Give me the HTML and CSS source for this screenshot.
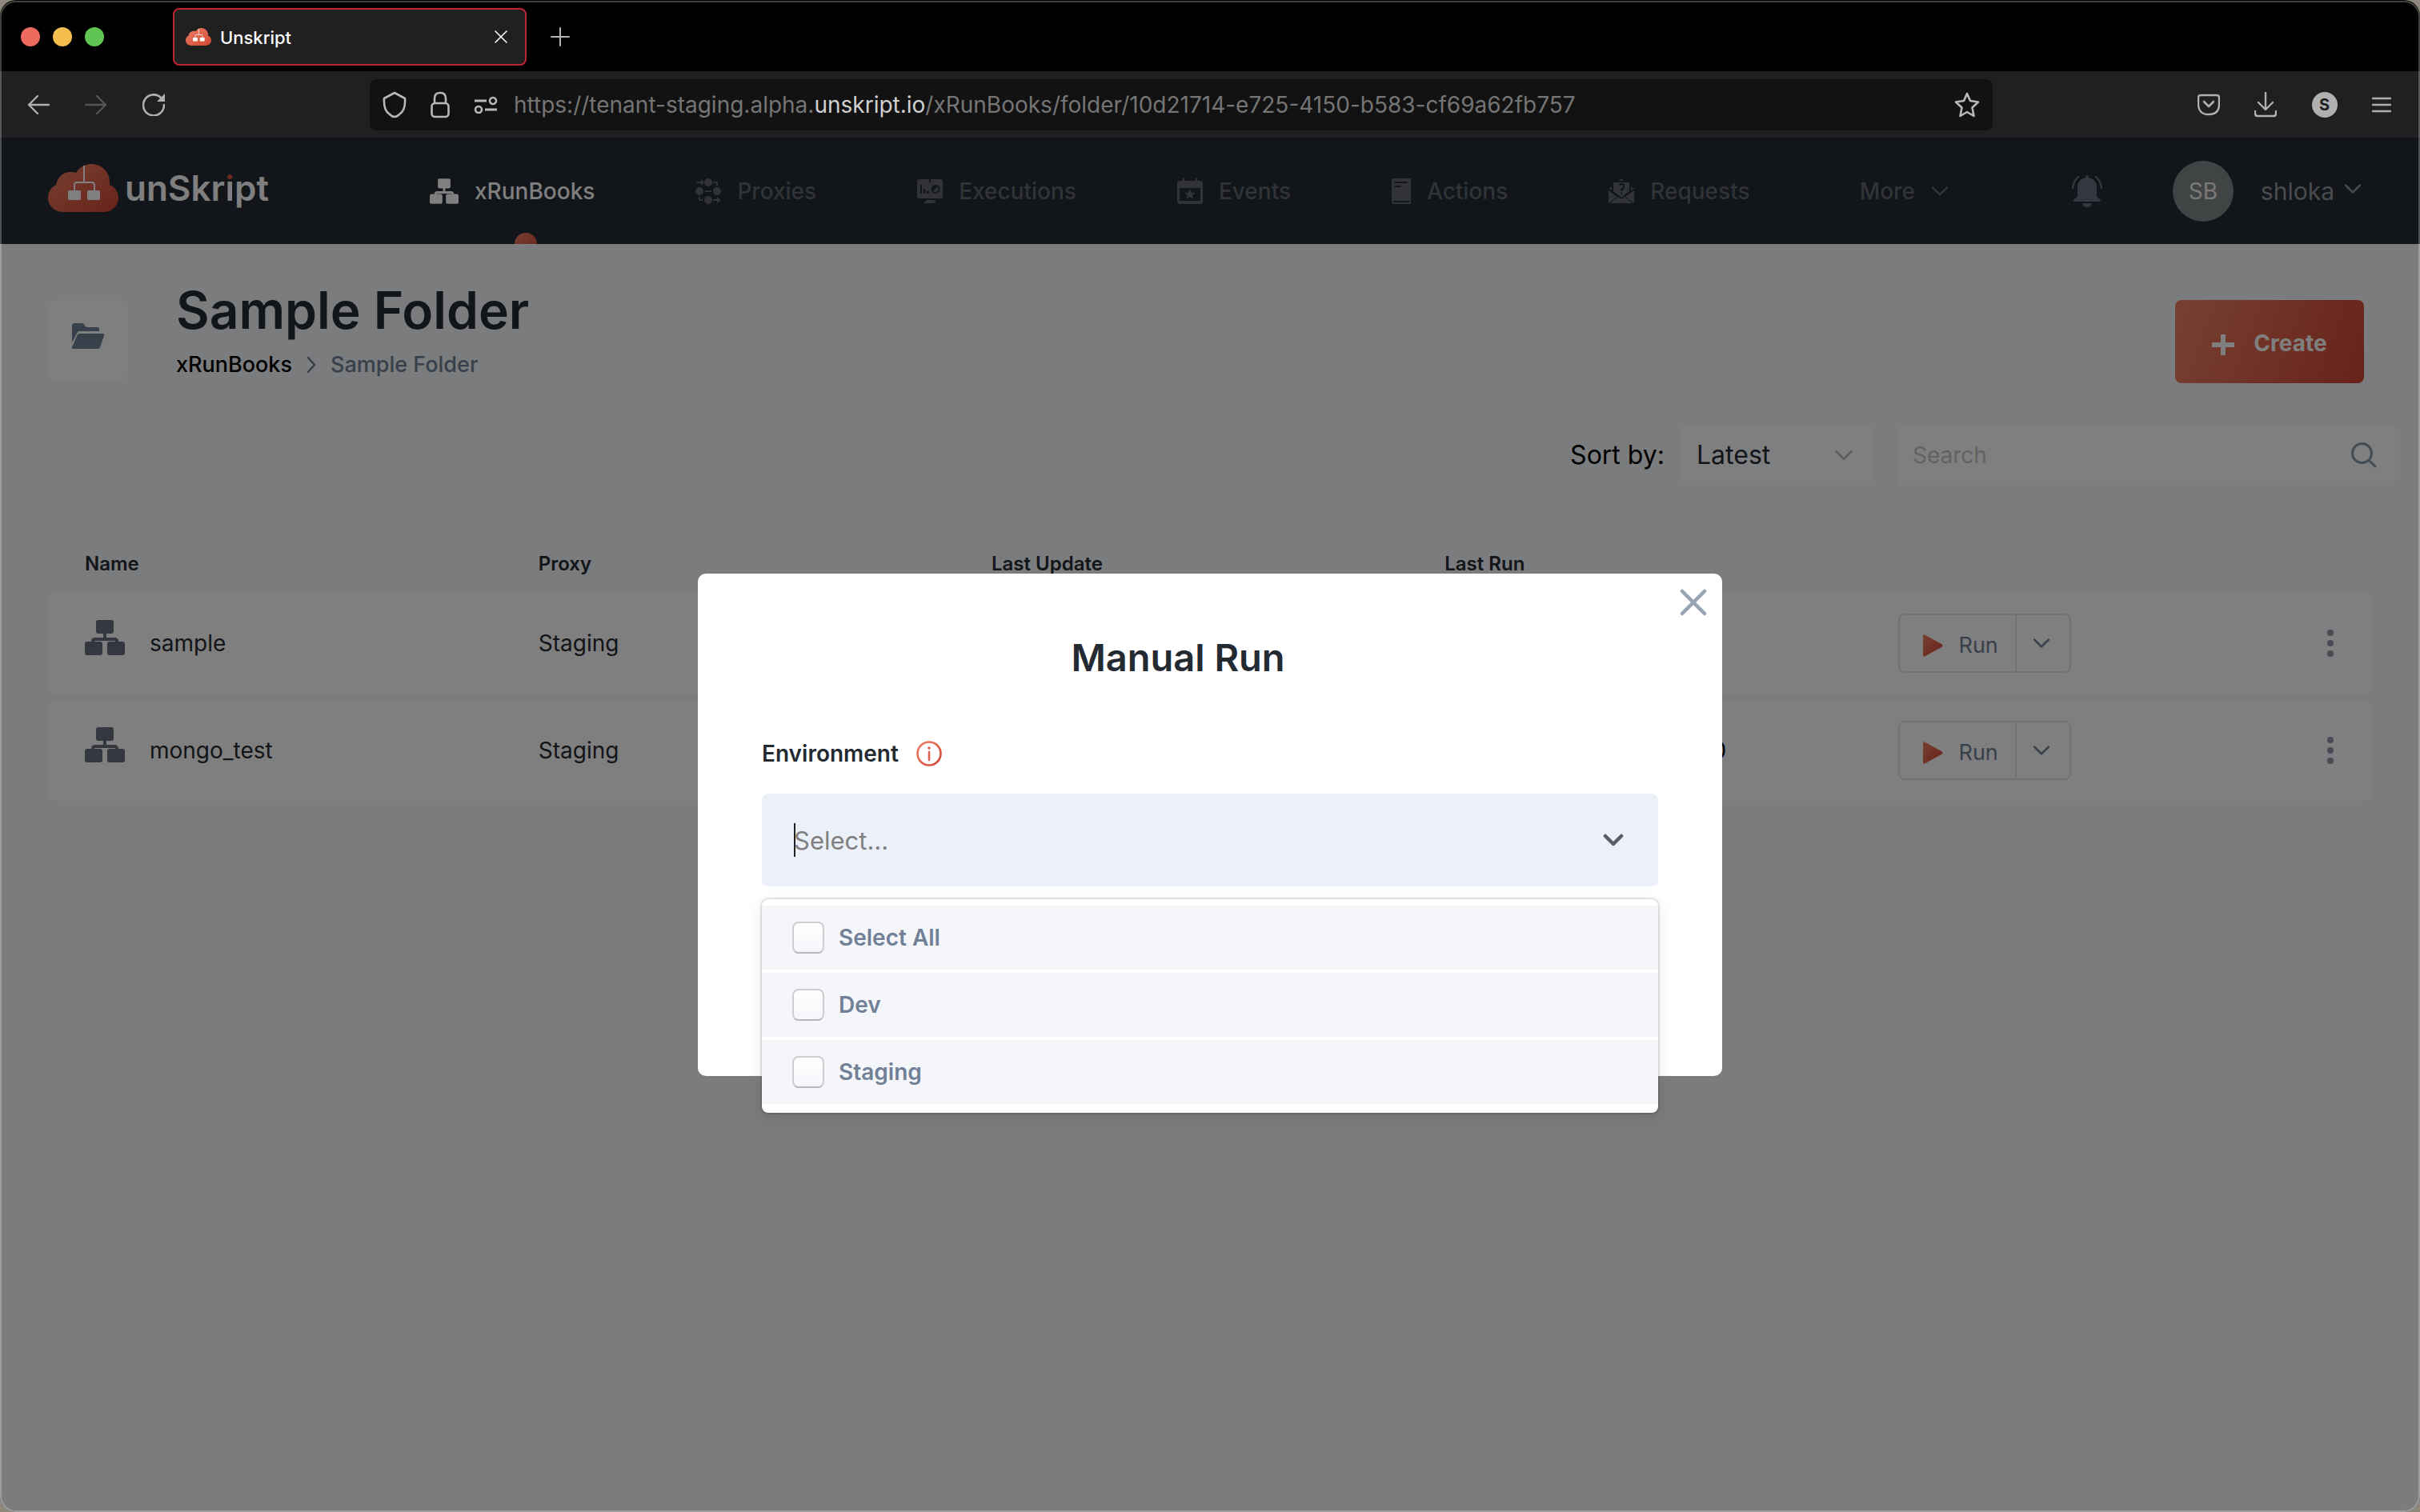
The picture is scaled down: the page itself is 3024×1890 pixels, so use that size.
FILE: index.html
```html
<!DOCTYPE html>
<html lang="en">
<head>
<meta charset="utf-8">
<title>Unskript</title>
<link rel="stylesheet" href="styles.css">
</head>
<body>
<svg class="defs" aria-hidden="true">
  <defs>
    <linearGradient id="coral" x1="0" y1="0" x2="1" y2="1"><stop offset="0" stop-color="#ee8066"/><stop offset="1" stop-color="#d04632"/></linearGradient>
    <symbol id="chevron" viewBox="0 0 20 12"><path d="M2 2l8 8 8-8" fill="none" stroke="currentColor" stroke-width="2.4" stroke-linecap="round" stroke-linejoin="round"/></symbol>
    <symbol id="tree" viewBox="0 0 50 44"><rect x="14" y="0" width="22" height="17" rx="3"/><rect x="0" y="27" width="22" height="17" rx="3"/><rect x="28" y="27" width="22" height="17" rx="3"/><path d="M25 16v8M10 28v-1q0-3 3-3h24q3 0 3 3v1" fill="none" stroke="currentColor" stroke-width="4"/></symbol>
    <symbol id="cloud" viewBox="0 0 88 60"><path d="M19 60C8 60 0 52 0 42c0-7 4-13 10-16C12 16 19 10 28 10c3 0 5 0 7 1C39 4 46 0 54 0c13 0 23 10 23 22v4c7 3 11 9 11 16 0 10-8 18-18 18z" fill="url(#coral)"/><path d="M45 2v21M33 34v-8q0-3 3-3h19q3 0 3 3v8" fill="none" stroke="#fff" stroke-width="2"/><rect x="25" y="33" width="16" height="12" rx="1" fill="#fff"/><rect x="49" y="33" width="16" height="12" rx="1" fill="#fff"/></symbol>
    <symbol id="play" viewBox="0 0 26 28"><path d="M1 2Q1-1 4 1l20 11q3 2 0 4L4 27q-3 2-3-1z" fill="url(#coral)"/></symbol>
    <symbol id="dots" viewBox="0 0 8 34"><circle cx="4" cy="4" r="4"/><circle cx="4" cy="17" r="4"/><circle cx="4" cy="30" r="4"/></symbol>
  </defs>
</svg>

<div class="window">
  <div class="tabstrip">
    <div class="lights"><span class="light red"></span><span class="light amber"></span><span class="light green"></span></div>
    <div class="tab">
      <svg class="favicon"><use href="#cloud"/></svg>
      <span class="tab-title">Unskript</span>
      <button class="plain" aria-label="Close tab"><svg width="16" height="16" viewBox="0 0 16 16"><path d="M1 1l14 14M15 1L1 15" stroke="#fbfbfe" stroke-width="1.600" stroke-linecap="round"/></svg></button>
    </div>
    <button class="plain" aria-label="New tab"><svg width="24" height="24" viewBox="0 0 24 24"><path d="M12 1v22M1 12h22" stroke="#b5b5b5" stroke-width="2" stroke-linecap="round"/></svg></button>
  </div>

  <div class="toolbar">
    <div class="history">
      <button class="plain" aria-label="Back"><svg width="28" height="28" viewBox="0 0 28 28"><path d="M27 14H2M13 3L2 14l11 11" fill="none" stroke="#b0b0b0" stroke-width="2.4" stroke-linecap="round" stroke-linejoin="round"/></svg></button>
      <button class="plain" aria-label="Forward"><svg width="28" height="28" viewBox="0 0 28 28"><path d="M1 14h25M15 3l11 11-11 11" fill="none" stroke="#545454" stroke-width="2.4" stroke-linecap="round" stroke-linejoin="round"/></svg></button>
      <button class="plain" aria-label="Reload"><svg width="28" height="28" viewBox="0 0 28 28"><path d="M27 14A13 13 0 1 1 23 5" fill="none" stroke="#b0b0b0" stroke-width="2.6" stroke-linecap="round"/><path d="M28 0v10H18z" fill="#b0b0b0"/></svg></button>
    </div>
    <div class="address">
      <svg width="30" height="34" viewBox="0 0 30 34"><path d="M15 2L28 9q1 15-7 20-3 3-6 3t-6-3Q1 24 2 9z" fill="none" stroke="#b8b8b8" stroke-width="2.6" stroke-linejoin="round"/></svg>
      <svg width="24" height="34" viewBox="0 0 24 34"><rect x="1.500" y="15" width="21" height="17" rx="4" fill="none" stroke="#b8b8b8" stroke-width="2.6"/><path d="M5 15V9q0-7 7-7t7 7v6" fill="none" stroke="#b8b8b8" stroke-width="2.6"/></svg>
      <svg width="30" height="22" viewBox="0 0 30 22"><path d="M1 6h15M14 17h15" stroke="#b8b8b8" stroke-width="3"/><circle cx="24" cy="6" r="4" fill="none" stroke="#b8b8b8" stroke-width="2.6"/><circle cx="6" cy="17" r="4" fill="none" stroke="#b8b8b8" stroke-width="2.6"/></svg>
      <span class="url">https://tenant-staging.alpha.<b>unskript.io</b>/xRunBooks/folder/10d21714-e725-4150-b583-cf69a62fb757</span>
      <button class="plain" aria-label="Bookmark"><svg width="32" height="32" viewBox="0 0 32 32"><path d="M16 2l4 9 10 1.500-7.500 7 2 10.500L16 25l-8.500 5 2-10.500L2 12.500 12 11z" fill="none" stroke="#b8b8b8" stroke-width="2.6" stroke-linejoin="round"/></svg></button>
    </div>
    <div class="tools">
      <button class="plain" aria-label="Pocket"><svg width="28" height="28" viewBox="0 0 28 28"><path d="M4 2h20q3 0 3 3v8q0 13-13 13T1 13V5q0-3 3-3z" fill="none" stroke="#b0b0b0" stroke-width="2.4"/><path d="M8 10l6 6 6-6" fill="none" stroke="#b0b0b0" stroke-width="2.600" stroke-linecap="round" stroke-linejoin="round"/></svg></button>
      <button class="plain" aria-label="Downloads"><svg width="28" height="32" viewBox="0 0 28 32"><path d="M14 1v20M5 13l9 9 9-9M1 24v3q0 3 3 3h20q3 0 3-3v-3" fill="none" stroke="#b0b0b0" stroke-width="2.4" stroke-linecap="round" stroke-linejoin="round"/></svg></button>
      <button class="plain account">S</button>
      <button class="plain" aria-label="Menu"><svg width="24" height="20" viewBox="0 0 24 20"><path d="M1 2h22M1 10h22M1 18h22" stroke="#b0b0b0" stroke-width="2.400" stroke-linecap="round"/></svg></button>
    </div>
  </div>

  <div class="app">
    <header class="header">
      <a class="brand" href="#"><svg class="logo"><use href="#cloud"/></svg><span>unSkr<span class="dot-i">i</span>pt</span></a>
      <nav class="nav">
        <a class="nav-item active" href="#"><svg width="36" height="32"><use href="#tree"/></svg>xRunBooks</a>
        <a class="nav-item" href="#"><svg width="32" height="32" viewBox="0 0 32 32"><circle cx="16" cy="5" r="5"/><circle cx="5" cy="16" r="5"/><circle cx="27" cy="16" r="5"/><circle cx="16" cy="27" r="5"/><path d="M2 4h5V1l4 4-4 4V6H2zM22 4h6v5h-2V6h-4zM4 23h2v3h3v2H4zM22 26h5v-3l5 4-5 4v-3h-5zM12 15h8v2h-8z"/></svg>Proxies</a>
        <a class="nav-item" href="#"><svg width="32" height="32" viewBox="0 0 32 32"><path fill-rule="evenodd" d="M3 1h12v4h2V1h12q3 0 3 3v19q0 2-3 2H3q-3 0-3-2V4q0-3 3-3zM4 8v11h2V8zM8 13v6h2v-6zM12 16v3h3v-3zM23 8a5.500 5.500 0 1 0 .1 0z"/><path d="M12 27h8l3 2v2H9v-2zM23 13l3-3 1 5-4 3-3-2z"/></svg>Executions</a>
        <a class="nav-item" href="#"><svg width="32" height="32" viewBox="0 0 32 32"><path fill-rule="evenodd" d="M7 0h2v3h14V0h2v3h4q3 0 3 3v23q0 3-3 3H3q-3 0-3-3V6q0-3 3-3h4zM3 12v16h26V12z"/><path d="M16 13l2 4.500 5 .5-4 3 1.500 5-4.500-3-4.500 3L13 21l-4-3 5-.5z"/></svg>Events</a>
        <a class="nav-item" href="#"><svg width="24" height="32" viewBox="0 0 24 32"><path fill-rule="evenodd" d="M2 0h20q2 0 2 2v28q0 2-2 2H2q-2 0-2-2V2q0-2 2-2zM4 4v2h16V4zM4 9v2h8V9zM2 28v2h20v-2z"/></svg>Actions</a>
        <a class="nav-item" href="#"><svg width="32" height="32" viewBox="0 0 32 32"><path fill-rule="evenodd" d="M16 0l3 3h-6zM6 5h20v11L16 24 6 16zM13 9h2q0-1 1.500-1t1.500 2q0 1-1.500 2T15 15v1h2q0-1 1.500-2T20 10q0-4-3.500-4T13 9zM15 17.500h2v2h-2z"/><path d="M4 10v5L0 13zM28 10v5l4-2zM0 15l11 8-11 8zM32 15l-11 8 11 8zM2 31l10-8 4 3 4-3 10 8z"/></svg>Requests</a>
        <a class="nav-item more" href="#">More<svg width="22" height="14"><use href="#chevron"/></svg></a>
      </nav>
      <button class="plain bell" aria-label="Notifications"><svg width="38" height="40" viewBox="0 0 38 40"><path d="M17 3q0-3 2-3t2 3q10 2 10 12v10q0 3 4 5 3 3-1 3H4q-4 0-1-3 4-2 4-5V15Q7 5 17 3zM13 35h12q-1 5-6 5t-6-5z"/><path d="M8 2Q2 8 1 16M30 2q6 6 7 14" fill="none" stroke="currentColor" stroke-width="2.400" stroke-linecap="round"/></svg></button>
      <button class="plain user"><span class="avatar">SB</span><span class="user-name">shloka</span><svg width="22" height="14"><use href="#chevron"/></svg></button>
    </header>

    <main class="page">
      <div class="page-head">
        <div class="folder"><svg width="40" height="32" viewBox="0 0 40 32"><path d="M3 0h9q3 0 4 3 1 2 3 2h13q2 0 2 2v3H10q-3 0-4 3L0 24V3q0-3 3-3z"/><path d="M10 13h28q3 0 2 3l-5 14q-1 2-3 2H2q-3 0-2-2l6-14q1-3 4-3z"/></svg></div>
        <div class="titles">
          <h1>Sample Folder</h1>
          <nav class="crumbs"><a href="#">xRunBooks</a><svg width="12" height="20" viewBox="0 0 12 20"><path d="M2 1l8 9-8 9" fill="none" stroke="#718096" stroke-width="2.600" stroke-linecap="round"/></svg><span>Sample Folder</span></nav>
        </div>
        <button class="create"><svg width="28" height="26" viewBox="0 0 28 26"><path d="M14 0v26M0 13h28" stroke="#fff" stroke-width="6"/></svg>Create</button>
      </div>

      <div class="filters">
        <label for="sort">Sort by:</label>
        <div class="sort"><select id="sort"><option>Latest</option></select><svg width="24" height="14"><use href="#chevron"/></svg></div>
        <div class="search"><input type="text" placeholder="Search" aria-label="Search"><svg width="32" height="32" viewBox="0 0 32 32"><circle cx="13.500" cy="13.500" r="12" fill="none" stroke="#8899a6" stroke-width="3"/><path d="M22 22l8 8" stroke="#8899a6" stroke-width="3" stroke-linecap="round"/></svg></div>
      </div>

      <table class="books">
        <thead><tr><th>Name</th><th>Proxy</th><th>Last Update</th><th>Last Run</th><th></th></tr></thead>
        <tbody>
          <tr>
            <td><div class="name"><svg width="50" height="44"><use href="#tree"/></svg>sample</div></td><td>Staging</td><td></td><td></td>
            <td><div class="actions"><div class="split"><button class="plain run"><svg width="26" height="28"><use href="#play"/></svg>Run</button><button class="plain drop" aria-label="Run options"><svg width="22" height="14"><use href="#chevron"/></svg></button></div><button class="plain kebab" aria-label="More"><svg width="8" height="34"><use href="#dots"/></svg></button></div></td>
          </tr>
          <tr>
            <td><div class="name"><svg width="50" height="44"><use href="#tree"/></svg>mongo_test</div></td><td>Staging</td><td></td><td><div class="last-run">0</div></td>
            <td><div class="actions"><div class="split"><button class="plain run"><svg width="26" height="28"><use href="#play"/></svg>Run</button><button class="plain drop" aria-label="Run options"><svg width="22" height="14"><use href="#chevron"/></svg></button></div><button class="plain kebab" aria-label="More"><svg width="8" height="34"><use href="#dots"/></svg></button></div></td>
          </tr>
        </tbody>
      </table>
    </main>

    <div class="overlay">
      <section class="modal" role="dialog" aria-labelledby="modal-title">
        <div class="modal-top"><button class="plain" aria-label="Close"><svg width="34" height="34" viewBox="0 0 34 34"><path d="M3 3l28 28M31 3L3 31" stroke="#98a2b3" stroke-width="4.500" stroke-linecap="round"/></svg></button></div>
        <h2 id="modal-title">Manual Run</h2>
        <div class="field-label"><label for="environment">Environment</label><svg width="32" height="32" viewBox="0 0 32 32"><circle cx="16" cy="16" r="14.500" fill="none" stroke="url(#coral)" stroke-width="2.600"/><circle cx="16" cy="9" r="1.800" fill="#e0614b"/><path d="M16 14v10" stroke="#e0614b" stroke-width="2.600" stroke-linecap="round"/></svg></div>
        <div class="combo">
          <div class="control"><span class="caret"></span><input id="environment" type="text" placeholder="Select..."><svg width="26" height="16" viewBox="0 0 26 16"><path d="M3 3l10 10L23 3" fill="none" stroke="#5a5e64" stroke-width="4.500" stroke-linecap="round" stroke-linejoin="round"/></svg></div>
          <div class="menu">
            <label class="option"><input type="checkbox">Select All</label>
            <label class="option"><input type="checkbox">Dev</label>
            <label class="option"><input type="checkbox">Staging</label>
          </div>
        </div>
      </section>
    </div>
  </div>
</div>
</body>
</html>
```
FILE: styles.css
```css
* { box-sizing: border-box; }
body { margin: 0; background: #8f867c; font-family: Inter, sans-serif; font-size: 28px; line-height: 36px; color: #242a32; }
svg { display: block; flex: none; fill: currentColor; }
a { color: inherit; text-decoration: none; }
input, select, button { font: inherit; color: inherit; }
.defs { position: absolute; width: 0; height: 0; }
.plain { display: flex; align-items: center; padding: 0; border: 0; background: none; cursor: pointer; }

/* browser chrome */
.window { position: relative; display: flex; flex-direction: column; min-height: 100vh; border-radius: 20px; overflow: hidden; background: #000; }
.window::after { content: ""; position: absolute; inset: 1px 0 0; border: 2px solid rgba(255, 255, 255, .25); border-radius: 20px; pointer-events: none; }
.tabstrip { display: flex; align-items: center; height: 89px; padding: 3px 26px 0; }
.lights { display: flex; gap: 16px; margin-right: 86px; }
.light { width: 24px; height: 24px; border-radius: 50%; }
.red { background: #ec6a5e; }
.amber { background: #f4bf4f; }
.green { background: #61c554; }
.tab { display: flex; align-items: center; width: 442px; height: 72px; margin-right: 30px; padding: 0 22px 0 14px; border: 2px solid #bf2434; border-radius: 8px; background: #202020; }
.favicon { width: 32px; height: 22px; margin-right: 11px; }
.tab-title { flex: 1; padding-top: 2px; font-size: 22px; font-weight: 500; color: #fbfbfe; }
.toolbar { display: flex; align-items: center; height: 83px; padding: 0 36px 0 34px; background: #202020; }
.history { display: flex; align-items: center; gap: 44px; width: 428px; }
.address { display: flex; align-items: center; flex: 1; height: 64px; padding: 0 16px; border-radius: 8px; background: #121212; }
.address > svg { margin-right: 30px; }
.address > svg:nth-of-type(3) { margin-right: 20px; }
.url { flex: 1; color: #757575; }
.url b { font-weight: 400; color: #d0d0d0; }
.tools { display: flex; align-items: center; justify-content: space-between; width: 242px; margin-left: 256px; }
.account { justify-content: center; width: 32px; height: 32px; border-radius: 50%; background: #b0b0b0; color: #202020; font-size: 20px; font-weight: 700; }

/* application */
.app { position: relative; flex: 1; background: #f6f8fc; }
.header { display: flex; align-items: center; height: 133px; padding: 0 68px 0 60px; background: #242a32; color: #fff; }
.brand { display: flex; align-items: center; gap: 8px; width: 477px; height: 60px; padding-bottom: 8px; font-size: 44px; font-weight: 600; }
.logo { width: 88px; height: 60px; }
.dot-i { background: linear-gradient(#d8523c 36%, #fff 36%); -webkit-background-clip: text; background-clip: text; color: transparent; }
.nav { display: flex; gap: 126px; flex: 1; height: 133px; margin-right: 154px; color: #62666f; font-weight: 500; }
.nav-item { position: relative; display: flex; align-items: center; gap: 20px; overflow: hidden; }
.more { margin-left: auto; }
.active { color: #fff; }
.active::after { content: ""; position: absolute; bottom: -14px; left: 106px; width: 28px; height: 28px; border-radius: 50%; background: linear-gradient(135deg, #ee8066, #d04632); }
.bell { margin-right: 88px; color: #686e7e; }
.user { margin-right: 5px; color: #94979d; font-size: 30px; }
.user svg { margin-bottom: 6px; }
.avatar { display: flex; align-items: center; justify-content: center; width: 76px; height: 76px; margin-right: 34px; border-radius: 50%; background: #80888a; color: #f4f0f0; font-size: 28px; }
.user-name { margin-right: 12px; }

.page-head { display: flex; align-items: flex-start; padding: 47px 70px 0 60px; }
.folder { display: flex; align-items: center; justify-content: center; width: 100px; height: 100px; margin: 23px 60px 0 0; padding-bottom: 10px; border-radius: 10px; background: #fff; color: #718096; }
.titles { flex: 1; }
h1 { margin: 0; font-size: 64px; line-height: 72px; font-weight: 600; }
.crumbs { display: flex; align-items: center; gap: 18px; margin-top: 14px; color: #718096; font-size: 27px; font-weight: 500; }
.crumbs a { color: #000; }
.create { display: flex; align-items: center; justify-content: center; gap: 24px; width: 236px; height: 104px; margin-top: 23px; padding-top: 4px; border: 0; border-radius: 8px; background: linear-gradient(110deg, #ee8066, #d04632); color: #fff; font-weight: 700; }
.create svg { margin-top: 4px; }
.filters { display: flex; align-items: center; justify-content: flex-end; margin-top: 52px; padding-right: 31px; }
.filters label { margin-right: 20px; color: #000; font-size: 32px; }
.sort, .search { position: relative; display: flex; align-items: center; height: 76px; margin-right: 30px; border-radius: 8px; background: #fff; }
.sort { width: 240px; font-size: 32px; }
.sort select { width: 100%; height: 100%; padding: 0 20px; border: 0; background: none; appearance: none; }
.sort svg { position: absolute; right: 24px; color: #bbb; pointer-events: none; }
.search { width: 623px; margin-right: 0; padding: 0 23px 0 20px; }
.search input { flex: 1; padding: 0; border: 0; background: none; outline: 0; }
.search input::placeholder { color: #c4c4c4; opacity: 1; }

.books { width: calc(100% - 120px); margin: 62px 60px 0; table-layout: fixed; border-collapse: separate; border-spacing: 0 8px; }
.books th { width: 19.5%; height: 56px; padding: 0; text-align: left; font-size: 24px; font-weight: 600; }
.books th:first-child { width: 21.1%; padding-left: 46px; }
.books th:last-child { width: auto; }
.books td { height: 126px; padding: 0; background: #fff; }
.books td:first-child { padding-left: 46px; border-radius: 10px 0 0 10px; }
.books td:last-child { border-radius: 0 10px 10px 0; }
.name { display: flex; align-items: center; gap: 31px; }
.name svg { margin-bottom: 14px; color: #686e7e; }
.last-run { width: 352px; text-align: right; color: #000; }
.actions { display: flex; align-items: center; justify-content: space-between; padding-right: 48px; }
.split { display: flex; width: 216px; height: 74px; border: 2px solid #dfe6ee; border-radius: 8px; color: #718096; }
.run { gap: 20px; width: 144px; padding: 6px 0 0 28px; font-size: 27px; }
.drop { flex: 1; padding-right: 4px; justify-content: center; border-left: 2px solid #dfe6ee; }
.kebab { color: #8a94a6; }

/* dialog */
.overlay { position: absolute; inset: 0; display: flex; align-items: center; justify-content: center; background: rgba(0, 0, 0, .5); }
.modal { width: 1280px; padding: 19px 80px 237px; border-radius: 10px; background: #fff; }
.modal-top { display: flex; justify-content: flex-end; margin-right: -61px; }
h2 { margin: 24px 80px 0 0; font-size: 47px; line-height: 56px; font-weight: 600; text-align: center; }
.field-label { display: flex; align-items: center; gap: 22px; margin: 74px 0 32px; font-weight: 600; }
.combo { position: relative; }
.control { display: flex; align-items: center; height: 116px; padding: 0 43px 0 40px; border-radius: 8px; background: #ecf0f8; font-size: 31px; }
.control input { flex: 1; height: 42px; margin-left: -2px; padding: 0; border: 0; background: none; outline: 0; }
.control input::placeholder { color: #808080; opacity: 1; }
.caret { width: 2px; height: 42px; background: #222; }
.menu { position: absolute; top: 132px; left: 0; right: 0; display: flex; flex-direction: column; gap: 4px; padding: 8px 0 11px; border-radius: 8px; background: #fff; box-shadow: 0 0 0 2px rgba(0, 0, 0, .1), 0 8px 22px rgba(0, 0, 0, .1); }
.option { display: flex; align-items: center; gap: 18px; height: 80px; padding-left: 38px; background: #f5f6fa; color: #718096; font-weight: 600; }
.option input { width: 40px; height: 40px; margin: 0; appearance: none; border: 2px solid #ccced2; border-bottom-color: #b4b7bc; border-radius: 8px; background: linear-gradient(#fff, #f5f6fa); }
```
